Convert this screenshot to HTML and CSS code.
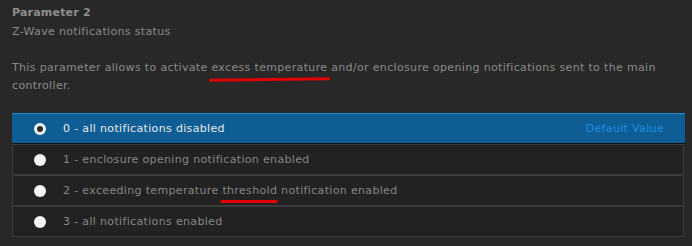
FILE: index.html
```html
<!DOCTYPE html>
<html>
<head>
<meta charset="utf-8">
<link rel="stylesheet" href="styles.css">
</head>
<body>
<div class="param">
  <div class="title">Parameter 2</div>
  <div class="subtitle">Z-Wave notifications status</div>
  <p class="desc">This parameter allows to activate <span class="mark mark-a">excess temperature</span> and/or enclosure opening notifications sent to the main controller.</p>
  <div class="options">
    <div class="opt selected"><span class="radio"></span><span class="label">0 - all notifications disabled</span><span class="default">Default Value</span></div>
    <div class="opt"><span class="radio"></span><span class="label">1 - enclosure opening notification enabled</span></div>
    <div class="opt"><span class="radio"></span><span class="label">2 - exceeding temperature <span class="mark mark-b">threshold</span> notification enabled</span></div>
    <div class="opt"><span class="radio"></span><span class="label">3 - all notifications enabled</span></div>
  </div>
</div>
</body>
</html>
```
FILE: styles.css
```css
html, body {
  margin: 0;
  padding: 0;
  background: #282828;
}
body {
  font-family: "DejaVu Sans", Verdana, sans-serif;
  font-size: 11px;
  letter-spacing: 0.34px;
  color: #8a8a8a;
  width: 692px;
  height: 246px;
  overflow: hidden;
}
.param {
  padding: 4px 8px 0 12px;
}
.title {
  font-weight: bold;
  line-height: 18px;
  color: #8e8e8e;
  letter-spacing: 0.2px;
}
.subtitle {
  line-height: 18px;
  margin-top: 1px;
}
.desc {
  margin: 18px 0 0 0;
  line-height: 18px;
  width: 660px;
}
.mark {
  position: relative;
}
.mark::after {
  content: "";
  position: absolute;
  left: -2px;
  right: -3px;
  bottom: -7px;
  height: 3px;
  border-radius: 2px;
  background: #e00000;
}
.mark-a::after {
  transform: rotate(-0.8deg);
}
.mark-b::after {
  left: -2px;
  right: -1px;
  bottom: -6px;
}
.options {
  margin-top: 18px;
  width: 672px;
}
.opt {
  display: flex;
  align-items: center;
  height: 29px;
  border: 1px solid #3b3b3b;
  background: #222222;
  color: #868686;
}
.opt.selected {
  background: #0f5d95;
  border: none;
  border-top: 1px solid #1d86cc;
  border-bottom: 1px solid #111;
  width: 673px;
  color: #e8e8e8;
}
.radio {
  width: 12px;
  height: 12px;
  border-radius: 50%;
  background: #f4f4f4;
  margin: 0 17px 0 21px;
  box-sizing: border-box;
  flex: none;
}
.selected .radio {
  border: 3px solid #f2f2f2;
  background: #2a2a2a;
  margin-left: 22px;
}
.label {
  flex: 1;
}
.default {
  color: #1e8fe0;
  margin-right: 21px;
}
```
